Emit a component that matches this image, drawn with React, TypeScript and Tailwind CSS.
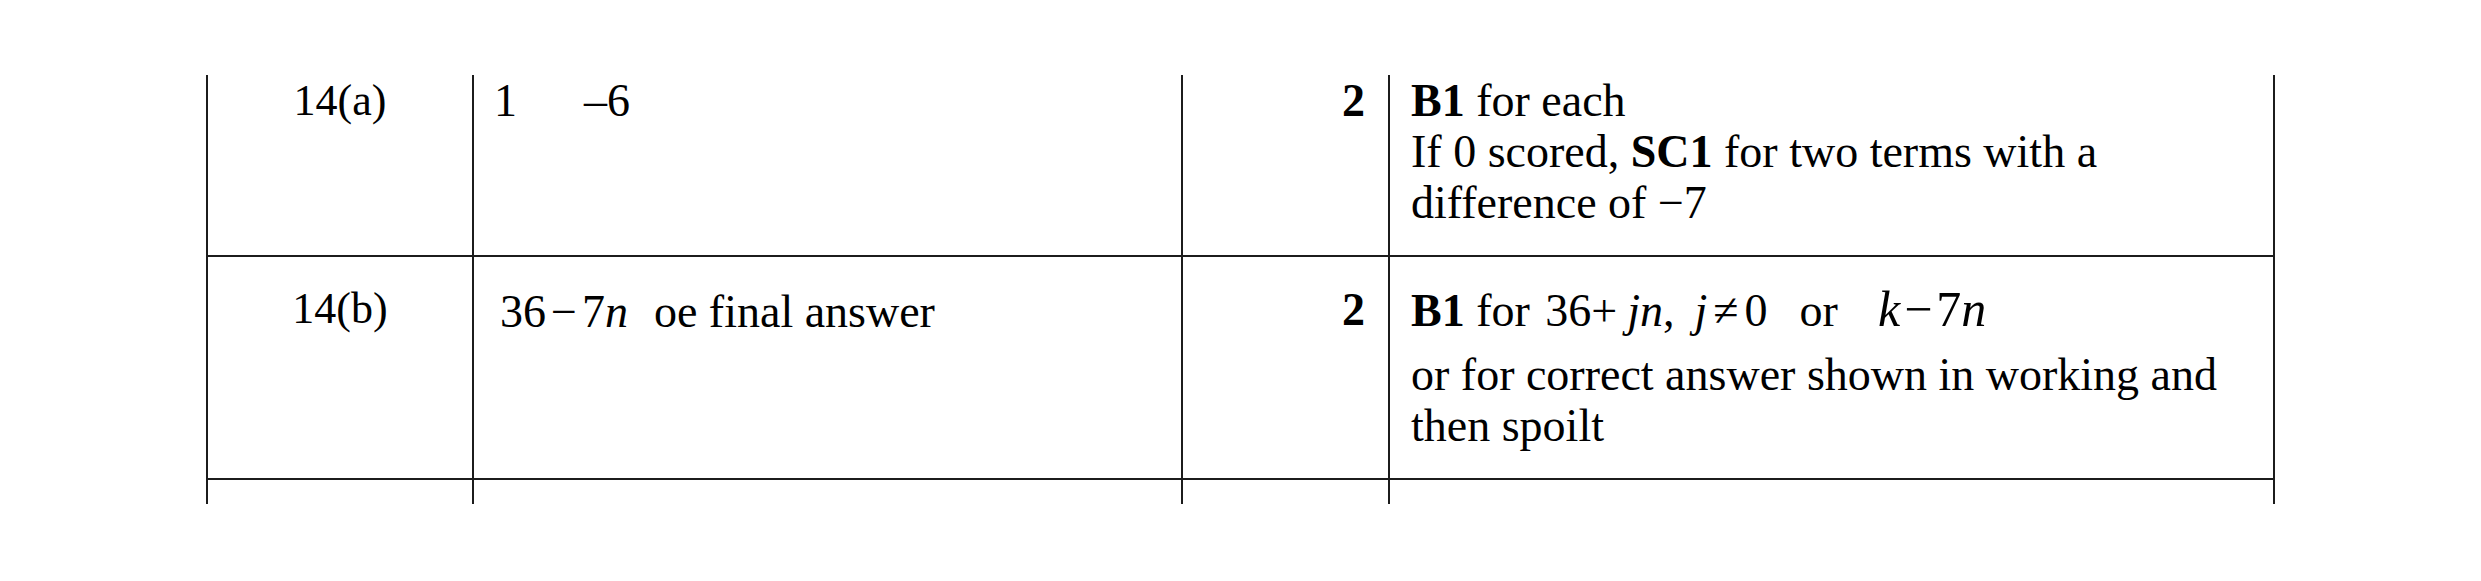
const serif = { fontFamily: '"Liberation Serif", "Times New Roman", serif' };

function Cell({ className = "", children }: { className?: string; children?: React.ReactNode }) {
  return <div className={`border-l-2 border-[#1c1c1c] ${className}`}>{children}</div>;
}

export default function App() {
  return (
    <div className="h-[581px] w-full bg-white text-black" style={serif}>
      <div className="ml-[206px] pt-[75px] w-[2069px]">
        <div className="grid grid-cols-[266px_709px_207px_887px]">
          {/* row 14(a) */}
          <Cell className="h-[182px] border-b-2 pt-0 text-center text-[44px] leading-[51px]">14(a)</Cell>
          <Cell className="h-[182px] border-b-2 pl-[20px] pt-0 text-[46px] leading-[51px]">
            1<span className="ml-[67px]">–6</span>
          </Cell>
          <Cell className="h-[182px] border-b-2 pr-[23px] pt-0 text-right text-[46px] font-bold leading-[51px]">2</Cell>
          <Cell className="h-[182px] border-b-2 border-r-2 pl-[21px] pt-0 text-[46px] leading-[51px]">
            <div>
              <b>B1</b> for each
            </div>
            <div>
              If 0 scored, <b>SC1</b> for two terms with a
            </div>
            <div>difference of −7</div>
          </Cell>

          {/* row 14(b) */}
          <Cell className="h-[223px] border-b-2 pt-[26px] text-center text-[44px] leading-[51px]">14(b)</Cell>
          <Cell className="h-[223px] border-b-2 pl-[26px] pt-[29px] text-[46px] leading-[51px]">
            36<span className="mx-[5px]">−</span>7<i>n</i>
            <span className="ml-[26px]">oe final answer</span>
          </Cell>
          <Cell className="h-[223px] border-b-2 pr-[23px] pt-[27px] text-right text-[46px] font-bold leading-[51px]">2</Cell>
          <Cell className="h-[223px] border-b-2 border-r-2 pl-[21px] pt-[27px] text-[46px] leading-[51px]">
            <div className="whitespace-nowrap">
              <b>B1</b> for <span className="ml-[4px]">36+</span>
              <i className="ml-[10px]">jn</i>,<i className="ml-[20px]">j</i>
              <span className="ml-[6px]">≠</span>
              <span className="ml-[6px]">0</span>
              <span className="ml-[32px]">or</span>
              <span className="ml-[40px] text-[50px]">
                <i>k</i>
                <span className="mx-[4px]">−</span>7<i>n</i>
              </span>
            </div>
            <div className="mt-[13px]">or for correct answer shown in working and</div>
            <div>then spoilt</div>
          </Cell>

          {/* next row stub */}
          <Cell className="h-[24px]" />
          <Cell className="h-[24px]" />
          <Cell className="h-[24px]" />
          <Cell className="h-[24px] border-r-2" />
        </div>
      </div>
    </div>
  );
}
